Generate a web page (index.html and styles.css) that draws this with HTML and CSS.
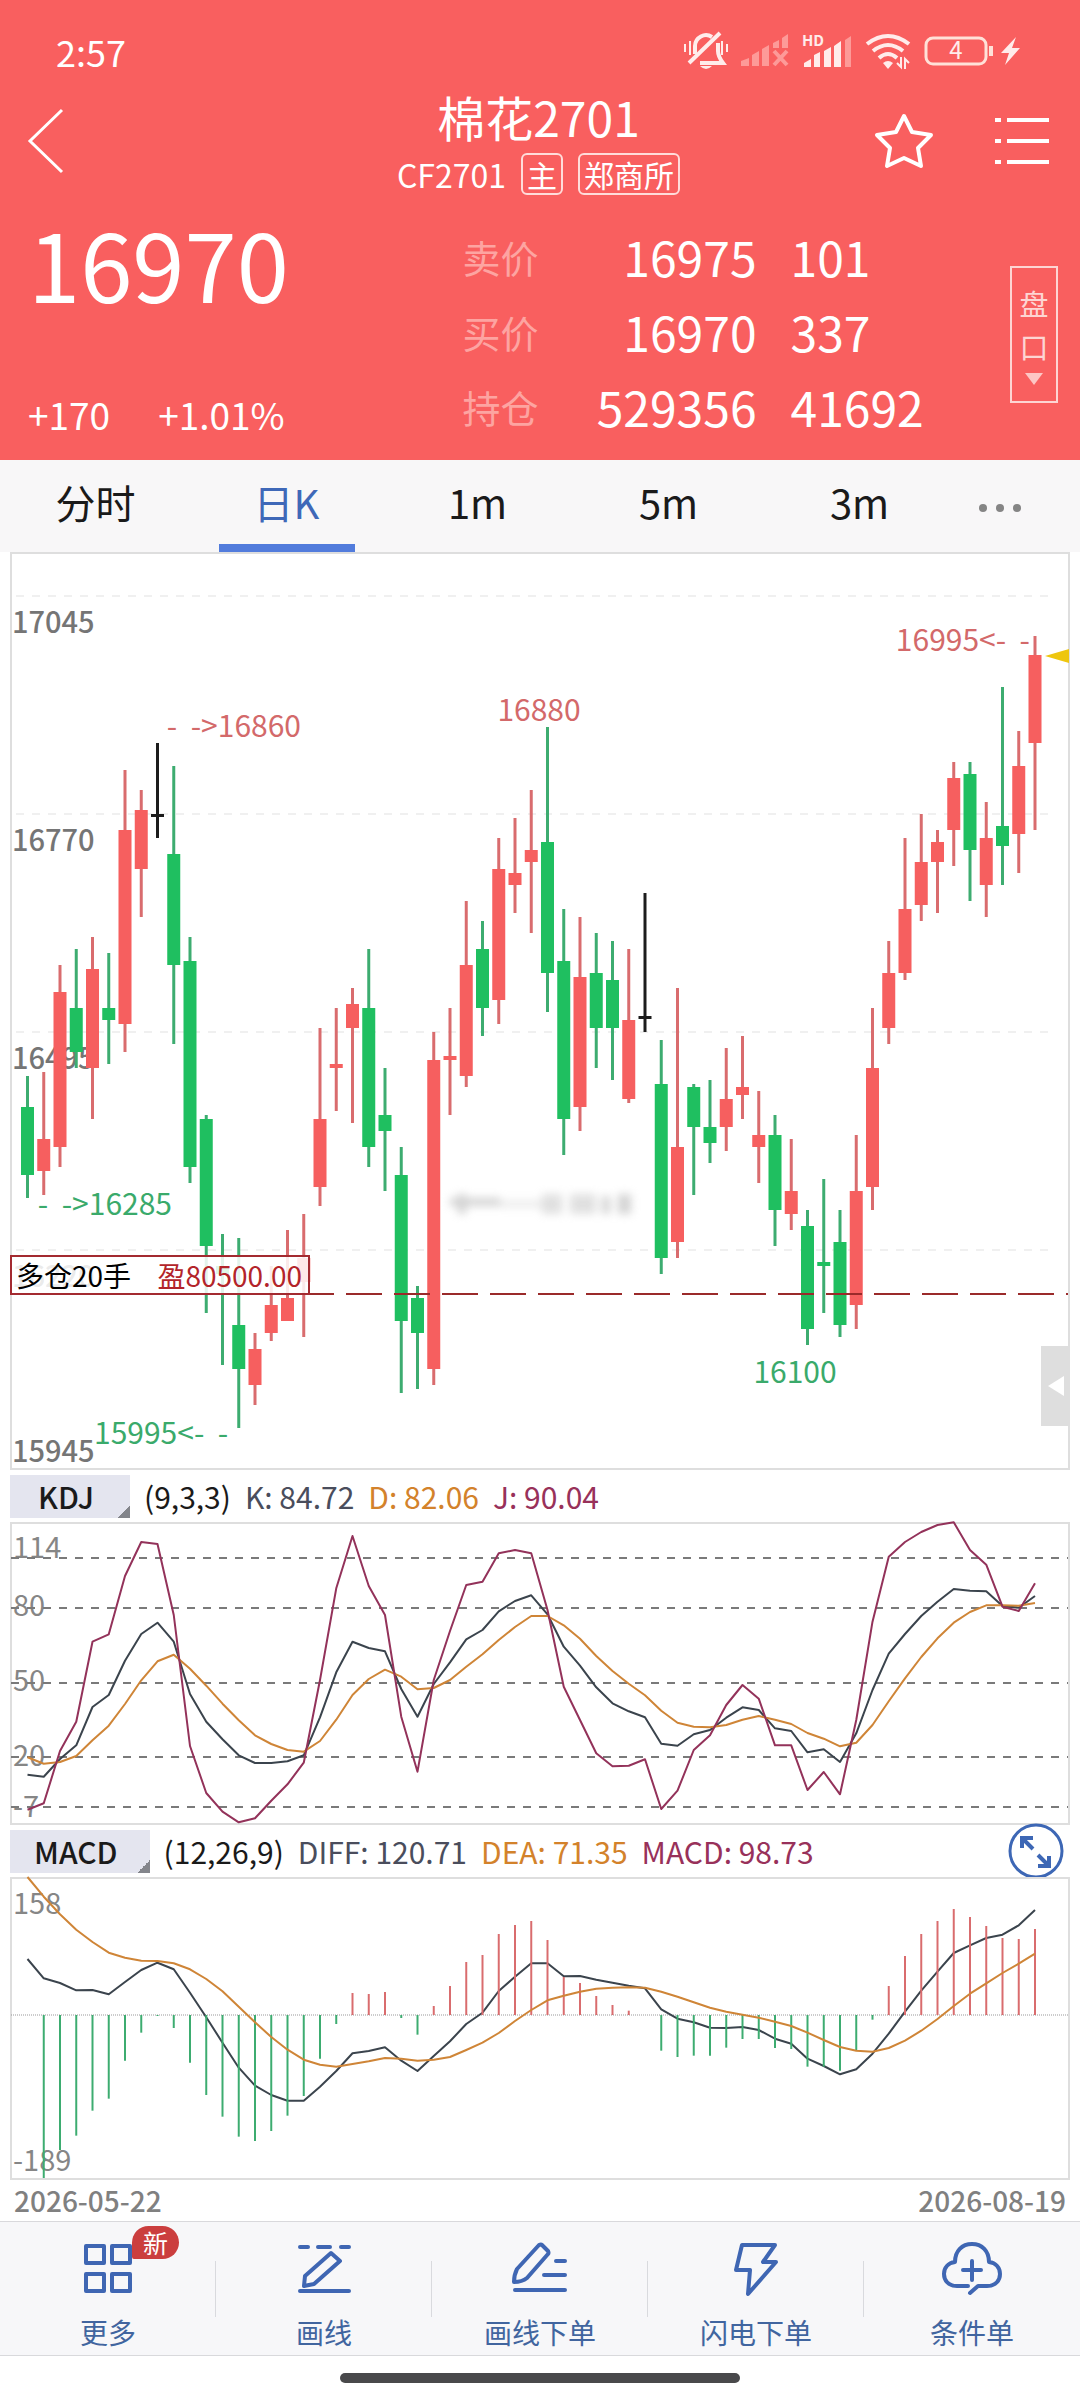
FILE: index.html
```html
<!DOCTYPE html>
<html lang="zh-CN">
<head>
    <meta charset="UTF-8">
    <meta name="viewport" content="width=device-width, initial-scale=1.0">
    <title>棉花2701</title>
    <link rel="stylesheet" href="styles.css">
</head>
<body>

    <header class="header">
        <div class="status">
            <span class="time">2:57</span>
            <div class="status-icons">
                <svg width="44" height="38" viewBox="0 0 44 38" fill="none" stroke="#ffeceb" stroke-width="4">
                    <path d="M11 22V14a11 11 0 0 1 17-9M34 11v8c0 5 2 8 5 12H16"/>
                    <path d="M5 31L36 1"/>
                    <path d="M1 12v8M6 9v14M38 9v14M43 12v8" stroke-width="2"/>
                    <path d="M16 34h12q-6 6-12 0z" fill="#ffeceb" stroke="none"/>
                </svg>
                <svg width="48" height="34" viewBox="0 0 48 34" fill="#fd9a98">
                    <path d="M0 32v-5l8-3v8zM11 32V21l7-4v15zM21 32V15l7-4v21zM32 14V9l6-3v8zM41 14V4l6-4v14z"/>
                    <path d="M33 17l13 14M46 17L33 31" stroke="#fd9a98" stroke-width="4"/>
                </svg>
                <svg width="50" height="34" viewBox="0 0 50 34" fill="#ffeceb">
                    <text x="0" y="12" class="hd">HD</text>
                    <path d="M2 33v-4l7-4v8zM12 33V21l6-3v15zM22 33V17l7-4v20zM32 33V12l7-5v26z"/>
                    <path d="M43 33V6l6-4v31z" fill="#fd9a98"/>
                </svg>
                <svg width="46" height="36" viewBox="0 0 46 36" fill="none" stroke="#ffeceb" stroke-width="4">
                    <path d="M2 11q21-16 42 0M8 18q15-12 30 0M14 25q9-8 18 0"/>
                    <path d="M18 30q5-4 10 0l-5 6z" fill="#ffeceb" stroke="none"/>
                    <path d="M36 24v10l-4-4M40 36V26l4 4" stroke-width="2"/>
                </svg>
                <svg width="96" height="30" viewBox="0 0 96 30" fill="none" stroke="#ffe1d8" stroke-width="3">
                    <rect x="2" y="2" width="60" height="26" rx="7"/>
                    <path d="M67 10v10" stroke-width="4"/>
                    <text x="32" y="23" class="battery-text">4</text>
                    <path d="M92 1L77 17h8l-4 12 15-17h-8z" fill="#ffeceb" stroke="none"/>
                </svg>
            </div>
        </div>

        <div class="title-bar">
            <button class="icon-btn back" aria-label="返回">
                <svg width="36" height="64" viewBox="0 0 36 64" fill="none" stroke="#fff" stroke-width="3"><path d="M34 1L2 32l32 31"/></svg>
            </button>
            <div class="title">
                <h1>棉花2701</h1>
                <div class="subtitle">
                    <span>CF2701</span>
                    <span class="tag">主</span>
                    <span class="tag">郑商所</span>
                </div>
            </div>
            <div class="title-actions">
                <button class="icon-btn" aria-label="自选">
                    <svg width="58" height="56" viewBox="0 0 58 56" fill="none" stroke="#fff" stroke-width="4" stroke-linejoin="round"><path d="M29 3l8 16 19 3-13 13 3 18-17-8-17 8 3-18L2 22l19-3z"/></svg>
                </button>
                <button class="icon-btn" aria-label="列表">
                    <svg width="54" height="50" viewBox="0 0 54 50" stroke="#fff" stroke-width="4"><path d="M0 4h6M12 4h42M0 25h6M12 25h42M0 46h6M12 46h42"/></svg>
                </button>
            </div>
        </div>

        <div class="quote">
            <div class="price-box">
                <div class="price">16970</div>
                <div class="change"><span>+170</span><span>+1.01%</span></div>
            </div>
            <table class="depth">
                <tr><th>卖价</th><td>16975</td><td>101</td></tr>
                <tr><th>买价</th><td>16970</td><td>337</td></tr>
                <tr><th>持仓</th><td>529356</td><td>41692</td></tr>
            </table>
            <button class="pankou">
                <span>盘</span><span>口</span>
                <svg width="18" height="12" viewBox="0 0 18 12"><path d="M0 0h18L9 12z" fill="#fdc6c4"/></svg>
            </button>
        </div>
    </header>

    <nav class="tabs">
        <button class="tab">分时</button>
        <button class="tab active">日K</button>
        <button class="tab">1m</button>
        <button class="tab">5m</button>
        <button class="tab">3m</button>
        <button class="tab more" aria-label="更多周期">
            <svg width="44" height="10" viewBox="0 0 44 10" fill="#858585"><circle cx="5" cy="5" r="4"/><circle cx="22" cy="5" r="4"/><circle cx="39" cy="5" r="4"/></svg>
        </button>
    </nav>

    <main class="charts">
        <div class="price-chart">
            <svg id="price" viewBox="0 0 1060 918"></svg>
            <button class="side-tab" aria-label="展开">
                <svg width="16" height="20" viewBox="0 0 16 20"><path d="M16 0v20L0 10z" fill="#fff"/></svg>
            </button>
        </div>

        <div class="legend">
            <button class="indicator">KDJ</button>
            <span>(9,3,3)</span>
            <span class="dark">K: 84.72</span>
            <span class="orange">D: 82.06</span>
            <span class="purple">J: 90.04</span>
        </div>
        <svg id="kdj" viewBox="0 0 1060 303"></svg>

        <div class="legend">
            <button class="indicator">MACD</button>
            <span>(12,26,9)</span>
            <span class="dark">DIFF: 120.71</span>
            <span class="orange">DEA: 71.35</span>
            <span class="purple">MACD: 98.73</span>
            <button class="icon-btn expand" aria-label="全屏">
                <svg width="56" height="56" viewBox="0 0 56 56" fill="none" stroke="#3d67b5" stroke-width="3">
                    <circle cx="28" cy="28" r="26"/>
                    <path d="M25 26L14 15M14 25V15h11M30 32l11 11M41 33v10H30" stroke-width="4"/>
                </svg>
            </button>
        </div>
        <svg id="macd" viewBox="0 0 1060 303"></svg>

        <div class="dates"><span>2026-05-22</span><span>2026-08-19</span></div>
    </main>

    <nav class="bottom">
        <a href="#" class="item">
            <svg viewBox="0 0 60 56"><path d="M8 6h18v17H8zM34 6h18v17H34zM8 34h18v17H8zM34 34h18v17H34z"/></svg>
            <span>更多</span>
            <b class="badge">新</b>
        </a>
        <a href="#" class="item">
            <svg viewBox="0 0 60 56"><path d="M6 7h8M24 7h12M47 7h8M6 51h49M10 46l1-10 26-23 9 8-26 23z"/></svg>
            <span>画线</span>
        </a>
        <a href="#" class="item">
            <svg viewBox="0 0 60 56"><path d="M4 42c0-5 1-9 3-13L29 5q2-1 3 0l6 6q1 2 0 3L17 38q-5 4-13 4zM46 21h9M34 35h21M5 50h50"/></svg>
            <span>画线下单</span>
        </a>
        <a href="#" class="item">
            <svg viewBox="0 0 60 56"><path d="M16 5h33L37 22h13L22 54l2-24H10z"/></svg>
            <span>闪电下单</span>
        </a>
        <a href="#" class="item">
            <svg viewBox="0 0 60 56"><path d="M26 46H15C6 46 2 40 2 34c0-6 4-11 11-12C13 11 20 4 30 4s17 7 17 18c7 1 11 6 11 12 0 6-4 12-13 12H36l-8 7M30 21v19M21 30h18"/></svg>
            <span>条件单</span>
        </a>
    </nav>
    <div class="home-bar"></div>

    <script src="chart.js"></script>
</body>
</html>
```

FILE: styles.css
```css
* {
    box-sizing: border-box;
}
body {
    margin: 0;
    background-color: #fff;
    font-family: "Noto Sans CJK SC", sans-serif;
    color: #1a1a1a;
}
button {
    font-family: inherit;
    color: inherit;
    background: none;
    border: none;
    padding: 0;
}
svg {
    display: block;
    overflow: visible;
}
.header {
    background-color: #f95f5f;
    color: #fff;
}

/* Статус-бар */
.status {
    display: flex;
    justify-content: space-between;
    align-items: center;
    height: 86px;
    padding: 15px 60px 0 56px;
}
.time {
    font-size: 36px;
    line-height: 40px;
}
.status-icons {
    display: flex;
    align-items: center;
    gap: 13px;
}
.hd {
    font-size: 15px;
    font-weight: bold;
}
.battery-text {
    font-size: 24px;
    text-anchor: middle;
    fill: #ffeceb;
    stroke: none;
}

/* Заголовок */
.title-bar {
    display: grid;
    grid-template-columns: 1fr auto 1fr;
    align-items: center;
    padding: 0 31px 0 28px;
}
.back {
    justify-self: start;
}
.title {
    text-align: center;
}
h1 {
    margin: 0;
    font-size: 48px;
    font-weight: normal;
    line-height: 60px;
}
.subtitle {
    display: flex;
    justify-content: center;
    align-items: center;
    gap: 15px;
    margin-top: 7px;
    font-size: 32px;
    line-height: 42px;
}
.tag {
    border: 2px solid #ffdcda;
    border-radius: 6px;
    padding: 0 4px;
    font-size: 30px;
    line-height: 38px;
}
.title-actions {
    display: flex;
    justify-content: flex-end;
    align-items: center;
    gap: 62px;
}

/* Котировка */
.quote {
    display: grid;
    grid-template-columns: 435fr 548fr auto;
    padding: 24px 22px 16px 28px;
}
.price-box {
    display: flex;
    flex-direction: column;
    justify-content: space-between;
}
.price {
    font-size: 94px;
    line-height: 86px;
}
.change {
    display: flex;
    gap: 48px;
    font-size: 37px;
    line-height: 60px;
}
.depth {
    border-collapse: collapse;
    justify-self: start;
    font-size: 48px;
    line-height: 75px;
}
.depth th, .depth td {
    padding: 0;
    font-weight: normal;
}
.depth th {
    width: 76px;
    font-size: 38px;
    color: #fda4a1;
}
.depth td {
    width: 218px;
    text-align: right;
}
.depth td:last-child {
    padding-left: 34px;
    text-align: left;
}
.pankou {
    display: flex;
    flex-direction: column;
    align-items: center;
    align-self: center;
    width: 48px;
    margin-top: 6px;
    padding: 14px 0 16px;
    border: 2px solid #fdd5d3;
    color: #fdd5d3;
    font-size: 29px;
    line-height: 43px;
}
.pankou svg {
    margin-top: 5px;
}

/* Вкладки периодов */
.tabs {
    display: flex;
    padding-right: 35px;
    background-color: #f8f7f8;
}
.tab {
    flex: 191;
    height: 92px;
    padding-bottom: 8px;
    font-size: 40px;
    line-height: 84px;
}
.active {
    color: #3f68b8;
    background: linear-gradient(#527cdc, #527cdc) center bottom / 136px 8px no-repeat;
}
.more {
    flex: 90;
    padding-bottom: 0;
}
.more svg {
    margin: 4px auto 0;
}

/* Графики */
.charts {
    padding: 0 10px;
}
.charts > svg, #price {
    width: 100%;
    height: auto;
}
.price-chart {
    position: relative;
}
.side-tab {
    position: absolute;
    right: 1px;
    bottom: 44px;
    display: flex;
    align-items: center;
    justify-content: flex-end;
    width: 28px;
    height: 80px;
    padding-right: 5px;
    background-color: #dedede;
}
.legend {
    display: flex;
    align-items: center;
    gap: 14px;
    height: 52px;
    font-size: 30px;
    white-space: nowrap;
}
.indicator {
    min-width: 120px;
    height: 43px;
    padding: 0 32px 0 24px;
    font-size: 30px;
    font-weight: 500;
    line-height: 43px;
    background: linear-gradient(135deg, transparent 50%, #83858b 50%) right bottom / 13px 13px no-repeat, #e4e5ef;
}
.dark {
    color: #4a4d5c;
}
.orange {
    color: #d3822b;
}
.purple {
    color: #98315a;
}
.expand {
    margin-left: auto;
    margin-right: 6px;
}
.dates {
    display: flex;
    justify-content: space-between;
    padding: 0 4px;
    font-size: 28px;
    font-weight: 500;
    line-height: 41px;
    color: #808080;
}
.frame {
    fill: none;
    stroke: #dedede;
    stroke-width: 2;
}
.grid {
    stroke: #f0f0f0;
    stroke-width: 2;
    stroke-dasharray: 8 8;
}
.level {
    stroke: #7a7a7a;
    stroke-width: 2;
    stroke-dasharray: 8 8;
}
.zero {
    stroke: #999;
    stroke-width: 1;
    stroke-dasharray: 1 1;
}
.axis {
    font-size: 29px;
    font-weight: 500;
    fill: #757575;
}
.axis-small {
    font-size: 29px;
    fill: #868686;
}
.mark {
    font-size: 30px;
    white-space: pre;
}
.middle {
    text-anchor: middle;
}
.end {
    text-anchor: end;
}
.red {
    fill: #f65f5f;
    stroke: #d96c6e;
}
.green {
    fill: #1fbf60;
    stroke: #3dac70;
}
.black {
    fill: #1c1c1c;
    stroke: #1c1c1c;
}
.red-text {
    fill: #d3696a;
}
.green-text {
    fill: #3aaa6b;
}
.line {
    fill: none;
    stroke-width: 2;
    stroke-linejoin: round;
}
.line-dark {
    stroke: #3b444d;
}
.line-orange {
    stroke: #cf8537;
}
.line-purple {
    stroke: #93325a;
}
.cost-line {
    stroke: #9a2a2a;
    stroke-width: 2;
    stroke-dasharray: 36 12;
}
.cost-box {
    fill: #fff;
    fill-opacity: 0.86;
    stroke: #a32a30;
    stroke-width: 2;
}
.cost-text {
    font-size: 28px;
}
.profit {
    fill: #b3242a;
}
.smudge {
    fill: #a8a8a8;
    filter: blur(4px);
}

/* Нижнее меню */
.bottom {
    display: flex;
    background-color: #f7f7f9;
    border-top: 1px solid #d9d9dc;
    border-bottom: 1px solid #d9d9dc;
}
.item {
    position: relative;
    flex: 1;
    display: flex;
    flex-direction: column;
    align-items: center;
    gap: 16px;
    padding: 18px 0 3px;
    background: linear-gradient(#d9dade, #d9dade) right 39px / 1px 56px no-repeat;
    color: #41659f;
    font-size: 28px;
    line-height: 40px;
    text-decoration: none;
}
.item:last-child {
    background: none;
}
.item svg {
    width: 60px;
    height: 56px;
    fill: none;
    stroke: #3f66b3;
    stroke-width: 4;
    stroke-linecap: round;
    stroke-linejoin: round;
}
.badge {
    position: absolute;
    top: 4px;
    left: 50%;
    margin-left: 24px;
    width: 47px;
    border-radius: 17px 17px 17px 2px;
    background-color: #cb3e3e;
    color: #fff;
    font-size: 25px;
    font-weight: normal;
    line-height: 33px;
    text-align: center;
}
.home-bar {
    width: 37%;
    height: 10px;
    margin: 17px auto;
    border-radius: 5px;
    background-color: #49494b;
}
```

FILE: chart.js
```js
// Свечи: тип, максимум, верх тела, низ тела, минимум
const candles = [
    ["g", 16440, 16400, 16315, 16285], ["r", 16445, 16360, 16320, 16290],
    ["r", 16580, 16545, 16350, 16325], ["g", 16600, 16525, 16470, 16450],
    ["r", 16615, 16575, 16450, 16385], ["g", 16595, 16525, 16510, 16455],
    ["r", 16825, 16750, 16505, 16470], ["r", 16800, 16775, 16700, 16640],
    ["b", 16860, 16770, 16770, 16740], ["g", 16830, 16720, 16580, 16480],
    ["g", 16615, 16585, 16325, 16305], ["g", 16390, 16385, 16225, 16140],
    ["g", 16240, 16200, 16190, 16075], ["g", 16235, 16125, 16070, 15995],
    ["r", 16115, 16095, 16050, 16025], ["r", 16200, 16150, 16115, 16105],
    ["r", 16245, 16160, 16130, 16130], ["r", 16265, 16210, 16180, 16110],
    ["r", 16500, 16385, 16300, 16275], ["r", 16525, 16455, 16450, 16395],
    ["r", 16550, 16530, 16500, 16380], ["g", 16600, 16525, 16350, 16325],
    ["g", 16450, 16390, 16370, 16295], ["g", 16350, 16315, 16130, 16040],
    ["g", 16175, 16160, 16115, 16045], ["r", 16495, 16460, 16070, 16050],
    ["r", 16525, 16465, 16460, 16390], ["r", 16660, 16580, 16440, 16425],
    ["g", 16635, 16600, 16525, 16490], ["r", 16740, 16700, 16535, 16505],
    ["r", 16765, 16695, 16680, 16645], ["r", 16800, 16725, 16710, 16620],
    ["g", 16880, 16735, 16570, 16520], ["g", 16650, 16585, 16385, 16340],
    ["r", 16640, 16565, 16400, 16370], ["g", 16620, 16570, 16500, 16450],
    ["g", 16610, 16560, 16500, 16435], ["r", 16600, 16510, 16410, 16405],
    ["b", 16670, 16515, 16515, 16495], ["g", 16485, 16430, 16210, 16190],
    ["r", 16550, 16350, 16230, 16210], ["g", 16430, 16425, 16375, 16290],
    ["g", 16435, 16375, 16355, 16330], ["r", 16475, 16410, 16375, 16345],
    ["r", 16490, 16425, 16415, 16385], ["r", 16420, 16365, 16350, 16305],
    ["g", 16390, 16365, 16270, 16225], ["r", 16360, 16295, 16265, 16245],
    ["g", 16270, 16250, 16120, 16100], ["g", 16310, 16205, 16200, 16140],
    ["g", 16270, 16230, 16125, 16110], ["r", 16365, 16295, 16150, 16120],
    ["r", 16525, 16450, 16300, 16270], ["r", 16610, 16570, 16500, 16480],
    ["r", 16740, 16650, 16570, 16560], ["r", 16770, 16710, 16655, 16635],
    ["r", 16750, 16735, 16710, 16645], ["r", 16835, 16815, 16750, 16705],
    ["g", 16835, 16820, 16725, 16660], ["r", 16785, 16740, 16680, 16640],
    ["g", 16930, 16755, 16730, 16680], ["r", 16875, 16830, 16745, 16695],
    ["r", 16995, 16970, 16860, 16750]
];

// Линии индикаторов: три единицы на пиксель, сверху вниз
const K = [944, 950, 897, 856, 741, 705, 602, 522, 488, 545, 702, 785, 838, 886, 909, 909, 904, 886, 772, 637, 545, 564, 574, 687, 770, 672, 607, 538, 510, 454, 423, 406, 463, 560, 617, 682, 730, 754, 772, 851, 857, 823, 810, 773, 742, 750, 805, 813, 877, 868, 906, 820, 690, 581, 522, 468, 425, 387, 392, 394, 438, 443, 408];
const D = [892, 911, 906, 888, 841, 797, 732, 661, 604, 584, 626, 677, 731, 781, 826, 852, 870, 875, 843, 779, 705, 657, 629, 650, 688, 684, 660, 620, 583, 540, 501, 468, 468, 496, 536, 588, 633, 671, 706, 752, 788, 800, 802, 795, 779, 768, 779, 792, 819, 836, 859, 848, 795, 724, 655, 591, 535, 488, 456, 436, 436, 437, 429];
const J = [1049, 1030, 873, 785, 545, 523, 348, 246, 252, 465, 858, 999, 1055, 1087, 1075, 1022, 973, 908, 660, 385, 228, 378, 465, 770, 935, 660, 513, 375, 365, 280, 270, 280, 450, 680, 780, 880, 919, 917, 898, 1047, 992, 870, 826, 735, 675, 716, 856, 856, 990, 936, 1003, 780, 485, 290, 246, 216, 195, 187, 270, 314, 440, 453, 370];
const DIFF = [417, 475, 489, 511, 510, 523, 486, 450, 428, 448, 518, 592, 668, 743, 797, 825, 842, 842, 800, 753, 700, 693, 682, 722, 753, 708, 664, 612, 578, 513, 470, 430, 430, 469, 468, 479, 488, 497, 505, 568, 596, 607, 623, 624, 621, 630, 656, 671, 716, 738, 763, 748, 701, 641, 575, 512, 455, 399, 376, 354, 344, 316, 270];
const DEA = [171, 230, 283, 329, 366, 398, 413, 422, 423, 430, 448, 477, 514, 560, 607, 651, 689, 719, 734, 740, 732, 724, 714, 716, 722, 719, 711, 690, 668, 639, 603, 570, 541, 527, 515, 506, 503, 502, 503, 515, 530, 547, 563, 575, 584, 593, 605, 618, 638, 660, 681, 692, 695, 684, 662, 632, 597, 558, 521, 490, 459, 431, 401];
const BARS = [585, 1074, 990, 947, 872, 836, 722, 638, 588, 624, 728, 825, 890, 950, 963, 933, 887, 828, 716, 612, 519, 522, 516, 594, 644, 558, 498, 426, 405, 342, 315, 303, 360, 471, 489, 528, 555, 572, 585, 692, 711, 707, 707, 683, 657, 657, 684, 687, 740, 740, 752, 692, 599, 498, 408, 342, 303, 267, 291, 318, 354, 357, 327];

const colors = { r: "red", g: "green", b: "black" };

const x = i => 17.5 + 16.25 * i;
const priceY = p => Math.round(916 - (p - 15945) * 218 / 275);
const kdjY = v => (v - 186) / 3;
const macdY = v => (v - 171) / 3;

function frame(height) {
    return `<rect class="frame" x="1" y="1" width="1058" height="${height - 2}"/>`;
}

function hLine(name, y, from = 1, to = 1058) {
    return `<line class="${name}" x1="${from}" x2="${to}" y1="${y}" y2="${y}"/>`;
}

function text(name, left, y, value) {
    return `<text class="${name}" x="${left}" y="${y}">${value}</text>`;
}

function curve(name, data, y) {
    const points = data.map((v, i) => x(i) + "," + y(v).toFixed(1)).join(" ");
    return `<polyline class="line ${name}" points="${points}"/>`;
}

// График цены
function drawPrice() {
    let html = frame(918);
    [17045, 16770, 16495, 16220].forEach(p => {
        html += hLine("grid", priceY(p), 6, 1046);
        html += text("axis", 2, priceY(p) + 37, p);
    });
    html += text("axis", 2, 910, 15945);

    candles.forEach(([type, high, top, bottom, low], i) => {
        const height = Math.max(priceY(bottom) - priceY(top), 3);
        html += `<g class="${colors[type]}">
            <line x1="${x(i)}" x2="${x(i)}" y1="${priceY(high)}" y2="${priceY(low)}" stroke-width="3"/>
            <rect x="${x(i) - 6.5}" y="${priceY(top)}" width="13" height="${height}" stroke="none"/>
        </g>`;
    });

    html += text("mark red-text end", 291, 185, "-  -&gt;16860");
    html += text("mark red-text middle", 529, 169, "16880");
    html += text("mark red-text end", 1020, 99, "16995&lt;-  -");
    html += text("mark green-text end", 162, 663, "-  -&gt;16285");
    html += text("mark green-text", 84, 892, "15995&lt;-  -");
    html += text("mark green-text middle", 785, 831, "16100");
    html += `<path d="M1035 104l24-7v14z" fill="#eec60f"/>`;

    html += `<g class="smudge" opacity="0.5" transform="translate(0 20)">
        <rect x="440" y="626" width="50" height="8"/><rect x="448" y="622" width="8" height="20"/>
        <rect x="490" y="628" width="44" height="8" opacity="0.4"/>
        <rect x="532" y="622" width="20" height="20" opacity="0.7"/><rect x="560" y="622" width="26" height="20" opacity="0.7"/>
        <rect x="592" y="624" width="8" height="18"/><rect x="608" y="622" width="13" height="20"/>
    </g>`;

    html += hLine("cost-line", 742, 288, 1058);
    html += `<rect class="cost-box" x="1" y="704" width="298" height="38"/>`;
    html += text("cost-text", 6, 735, "多仓20手");
    html += text("cost-text profit end", 292, 735, "盈80500.00");
    document.getElementById("price").innerHTML = html;
}

function drawKdj() {
    let html = frame(303);
    const levels = [[114, 294, 293], [80, 444, 469], [50, 669, 694], [20, 891, 917], [-7, 1041, 1070]];
    levels.forEach(([value, line, base]) => {
        html += text("axis-small", 3, kdjY(base), value);
        html += hLine("level", kdjY(line));
    });
    html += curve("line-dark", K, kdjY) + curve("line-orange", D, kdjY) + curve("line-purple", J, kdjY);
    document.getElementById("kdj").innerHTML = html;
}

function drawMacd() {
    const zero = macdY(585);
    let html = frame(303) + hLine("zero", zero);
    html += text("axis-small", 3, 37, 158) + text("axis-small", 3, 294, -189);
    html += curve("line-dark", DIFF, macdY);
    BARS.forEach((v, i) => {
        html += `<line class="${v > 585 ? "green" : "red"}" x1="${x(i)}" x2="${x(i)}" y1="${zero}" y2="${macdY(v)}" stroke-width="2"/>`;
    });
    html += curve("line-orange", DEA, macdY);
    document.getElementById("macd").innerHTML = html;
}

drawPrice();
drawKdj();
drawMacd();
```
